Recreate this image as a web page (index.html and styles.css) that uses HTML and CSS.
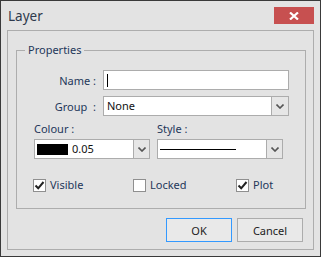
FILE: index.html
```html
<!DOCTYPE html>
<html lang="en">
<head>
    <meta charset="UTF-8">
    <title>Layer</title>
    <link rel="stylesheet" href="styles.css">
</head>
<body>
<div class="window">
    <div class="titlebar">
        <span class="title">Layer</span>
        <span class="close">
            <svg width="10" height="8" viewBox="0 0 10 8"><path d="M1 0.5 L9 7.5 M9 0.5 L1 7.5" stroke="#fff" stroke-width="2.2"/></svg>
        </span>
    </div>
    <div class="client">
        <fieldset class="group">
            <legend>Properties</legend>
            <div class="inner">
                <div class="row">
                    <label class="lbl">Name :</label>
                    <div class="field"><span class="caret"></span></div>
                </div>
                <div class="row">
                    <label class="lbl">Group&nbsp;&nbsp;:</label>
                    <div class="combo wide">
                        <span class="value">None</span>
                        <span class="drop"><svg width="8" height="5" viewBox="0 0 8 5"><path d="M0.5 0.5 L4 4 L7.5 0.5" fill="none" stroke="#555" stroke-width="1.6"/></svg></span>
                    </div>
                </div>
                <div class="pair">
                    <div class="col">
                        <div class="cap">Colour :</div>
                        <div class="combo colour">
                            <span class="swatch"></span><span class="value">0.05</span>
                            <span class="drop"><svg width="8" height="5" viewBox="0 0 8 5"><path d="M0.5 0.5 L4 4 L7.5 0.5" fill="none" stroke="#555" stroke-width="1.6"/></svg></span>
                        </div>
                    </div>
                    <div class="col">
                        <div class="cap">Style :</div>
                        <div class="combo style">
                            <span class="line"></span>
                            <span class="drop"><svg width="8" height="5" viewBox="0 0 8 5"><path d="M0.5 0.5 L4 4 L7.5 0.5" fill="none" stroke="#555" stroke-width="1.6"/></svg></span>
                        </div>
                    </div>
                </div>
                <div class="checks">
                    <label class="chk first"><span class="box"><svg width="11" height="11" viewBox="0 0 11 11"><path d="M1.5 5.5 L4.2 8.3 L9.5 2" fill="none" stroke="#222" stroke-width="2"/></svg></span>Visible</label>
                    <label class="chk second"><span class="box"></span>Locked</label>
                    <label class="chk"><span class="box"><svg width="11" height="11" viewBox="0 0 11 11"><path d="M1.5 5.5 L4.2 8.3 L9.5 2" fill="none" stroke="#222" stroke-width="2"/></svg></span>Plot</label>
                </div>
            </div>
        </fieldset>
        <div class="buttons">
            <button class="btn default">OK</button>
            <button class="btn">Cancel</button>
        </div>
    </div>
</div>
</body>
</html>
```

FILE: styles.css
```css
*{
    margin: 0;
    padding: 0;
    box-sizing: border-box;
}
body{
    font-family: "Noto Sans", "Open Sans", sans-serif;
    font-size: 11px;
    color: #23375a;
    background: #e3e3e3;
}
.window{
    width: 321px;
    height: 257px;
    border: 1px solid #3a3a3a;
    background: #e3e3e3;
    display: flex;
    flex-direction: column;
}
.titlebar{
    height: 29px;
    display: flex;
    justify-content: space-between;
    align-items: flex-start;
}
.title{
    font-size: 13.5px;
    color: #2e3a4c;
    padding: 5px 0 0 7px;
    line-height: 20px;
}
.close{
    width: 40px;
    height: 17px;
    margin: 6px 6px 0 0;
    background: #c75050;
    display: flex;
    align-items: center;
    justify-content: center;
}
.client{
    flex: 1;
    margin: 0 6px 6px 6px;
    border: 1px solid #adadad;
    display: flex;
    flex-direction: column;
}
.group{
    height: 166px;
    margin: 12px 7px 0 8px;
    border: 1px solid #adadad;
    padding: 0;
}
.group legend{
    margin-left: 8px;
    padding: 0 3px;
    line-height: 14px;
}
.inner{
    padding: 13px 0 0 17px;
}
.row{
    display: flex;
    height: 20px;
    margin-bottom: 6px;
    align-items: center;
}
.lbl{
    width: 62px;
    margin-right: 7px;
    text-align: right;
    white-space: pre;
}
.field{
    width: 186px;
    height: 20px;
    background: #fff;
    border: 1px solid #acacac;
    padding: 3px 0 0 3px;
}
.caret{
    display: block;
    width: 1px;
    height: 13px;
    background: #000;
}
.combo{
    height: 20px;
    background: #fff;
    border: 1px solid #acacac;
    display: flex;
    align-items: center;
}
.combo .value{
    flex: 1;
    padding-left: 3px;
    line-height: 18px;
    color: #111;
}
.combo .drop{
    width: 16px;
    height: 18px;
    border-left: 1px solid #acacac;
    background: #e6e6e6;
    display: flex;
    align-items: center;
    justify-content: center;
}
.combo.wide{
    width: 186px;
}
.combo.wide .drop{
    width: 17px;
}
.pair{
    display: flex;
    gap: 7px;
    margin-top: 3px;
}
.cap{
    line-height: 14px;
    margin-bottom: 3px;
}
.combo.colour{
    width: 116px;
}
.combo.style{
    width: 126px;
}
.swatch{
    width: 31px;
    height: 11px;
    margin-left: 2px;
    background: #000;
}
.colour .value{
    padding-left: 4px;
}
.line{
    flex: 1;
    height: 1px;
    margin: 0 30px 0 2px;
    background: #000;
}
.checks{
    display: flex;
    margin: 19px 0 0 -1px;
    line-height: 14px;
}
.chk{
    display: flex;
    align-items: center;
    gap: 4px;
}
.chk.first{
    width: 100px;
}
.chk.second{
    width: 103px;
}
.box{
    width: 13px;
    height: 13px;
    border: 1px solid #8f8f8f;
    background: #fff;
    display: flex;
    align-items: center;
    justify-content: center;
}
.buttons{
    display: flex;
    justify-content: flex-end;
    gap: 5px;
    margin: 9px 10px 0 0;
}
.btn{
    width: 66px;
    height: 24px;
    font: inherit;
    color: #222;
    background: #e9e9e9;
    border: 1px solid #acacac;
}
.btn.default{
    border-color: #3399ff;
}
```
